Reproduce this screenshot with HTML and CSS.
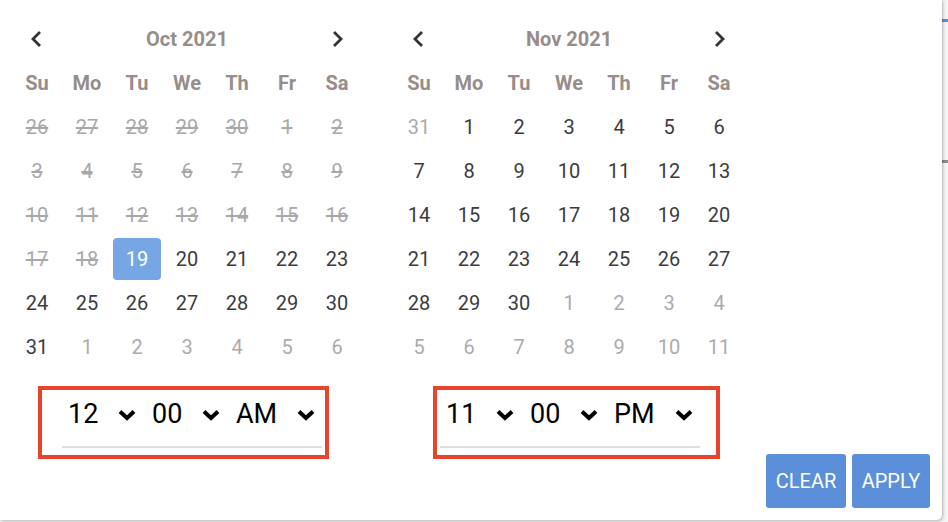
FILE: index.html
```html
<!DOCTYPE html>
<html>
<head>
<meta charset="utf-8">
<link rel="stylesheet" href="styles.css">
</head>
<body>
<div class="page-marks">
  <div class="mark mark-blue"></div>
  <div class="mark mark-gray"></div>
</div>
<div class="popup">
  <div class="columns">
    <div class="col">
      <div class="calendar">
        <div class="cal-head">
          <span class="nav"><svg width="14" height="18" viewBox="0 0 14 18"><polyline points="10,2 3,9 10,16" fill="none" stroke="#333" stroke-width="2.8"/></svg></span>
          <span class="title">Oct 2021</span>
          <span class="nav"><svg width="14" height="18" viewBox="0 0 14 18"><polyline points="4,2 11,9 4,16" fill="none" stroke="#333" stroke-width="2.8"/></svg></span>
        </div>
        <div class="grid">
          <span class="wd">Su</span><span class="wd">Mo</span><span class="wd">Tu</span><span class="wd">We</span><span class="wd">Th</span><span class="wd">Fr</span><span class="wd">Sa</span>
          <span class="d dis">26</span><span class="d dis">27</span><span class="d dis">28</span><span class="d dis">29</span><span class="d dis">30</span><span class="d dis">1</span><span class="d dis">2</span>
          <span class="d dis">3</span><span class="d dis">4</span><span class="d dis">5</span><span class="d dis">6</span><span class="d dis">7</span><span class="d dis">8</span><span class="d dis">9</span>
          <span class="d dis">10</span><span class="d dis">11</span><span class="d dis">12</span><span class="d dis">13</span><span class="d dis">14</span><span class="d dis">15</span><span class="d dis">16</span>
          <span class="d dis">17</span><span class="d dis">18</span><span class="d sel"><span class="sel-box">19</span></span><span class="d">20</span><span class="d">21</span><span class="d">22</span><span class="d">23</span>
          <span class="d">24</span><span class="d">25</span><span class="d">26</span><span class="d">27</span><span class="d">28</span><span class="d">29</span><span class="d">30</span>
          <span class="d">31</span><span class="d off">1</span><span class="d off">2</span><span class="d off">3</span><span class="d off">4</span><span class="d off">5</span><span class="d off">6</span>
        </div>
      </div>
      <div class="time-box time-box-left">
        <div class="time">
          <div class="tsel"><span>12</span><svg class="chev" width="20" height="14" viewBox="0 0 20 14"><polyline points="3,3.5 10,10 17,3.5" fill="none" stroke="#000" stroke-width="4"/></svg></div>
          <div class="tsel"><span>00</span><svg class="chev" width="20" height="14" viewBox="0 0 20 14"><polyline points="3,3.5 10,10 17,3.5" fill="none" stroke="#000" stroke-width="4"/></svg></div>
          <div class="tsel tsel-wide"><span>AM</span><svg class="chev" width="20" height="14" viewBox="0 0 20 14"><polyline points="3,3.5 10,10 17,3.5" fill="none" stroke="#000" stroke-width="4"/></svg></div>
        </div>
      </div>
    </div>
    <div class="col">
      <div class="calendar">
        <div class="cal-head">
          <span class="nav"><svg width="14" height="18" viewBox="0 0 14 18"><polyline points="10,2 3,9 10,16" fill="none" stroke="#333" stroke-width="2.8"/></svg></span>
          <span class="title">Nov 2021</span>
          <span class="nav"><svg width="14" height="18" viewBox="0 0 14 18"><polyline points="4,2 11,9 4,16" fill="none" stroke="#333" stroke-width="2.8"/></svg></span>
        </div>
        <div class="grid">
          <span class="wd">Su</span><span class="wd">Mo</span><span class="wd">Tu</span><span class="wd">We</span><span class="wd">Th</span><span class="wd">Fr</span><span class="wd">Sa</span>
          <span class="d off">31</span><span class="d">1</span><span class="d">2</span><span class="d">3</span><span class="d">4</span><span class="d">5</span><span class="d">6</span>
          <span class="d">7</span><span class="d">8</span><span class="d">9</span><span class="d">10</span><span class="d">11</span><span class="d">12</span><span class="d">13</span>
          <span class="d">14</span><span class="d">15</span><span class="d">16</span><span class="d">17</span><span class="d">18</span><span class="d">19</span><span class="d">20</span>
          <span class="d">21</span><span class="d">22</span><span class="d">23</span><span class="d">24</span><span class="d">25</span><span class="d">26</span><span class="d">27</span>
          <span class="d">28</span><span class="d">29</span><span class="d">30</span><span class="d off">1</span><span class="d off">2</span><span class="d off">3</span><span class="d off">4</span>
          <span class="d off">5</span><span class="d off">6</span><span class="d off">7</span><span class="d off">8</span><span class="d off">9</span><span class="d off">10</span><span class="d off">11</span>
        </div>
      </div>
      <div class="time-box time-box-right">
        <div class="time">
          <div class="tsel"><span>11</span><svg class="chev" width="20" height="14" viewBox="0 0 20 14"><polyline points="3,3.5 10,10 17,3.5" fill="none" stroke="#000" stroke-width="4"/></svg></div>
          <div class="tsel"><span>00</span><svg class="chev" width="20" height="14" viewBox="0 0 20 14"><polyline points="3,3.5 10,10 17,3.5" fill="none" stroke="#000" stroke-width="4"/></svg></div>
          <div class="tsel tsel-wide"><span>PM</span><svg class="chev" width="20" height="14" viewBox="0 0 20 14"><polyline points="3,3.5 10,10 17,3.5" fill="none" stroke="#000" stroke-width="4"/></svg></div>
        </div>
      </div>
    </div>
    <div class="actions">
      <button class="btn">CLEAR</button>
      <button class="btn btn-apply">APPLY</button>
    </div>
  </div>
</div>
</body>
</html>
```

FILE: styles.css
```css
html, body {
  margin: 0;
  padding: 0;
}
body {
  width: 948px;
  height: 522px;
  background: #f4f4f4;
  font-family: Roboto, "Liberation Sans", sans-serif;
  position: relative;
  overflow: hidden;
}
.page-marks {
  position: absolute;
  left: 942px;
  top: 0;
  width: 6px;
  height: 522px;
}
.mark {
  position: absolute;
  left: 0;
  width: 6px;
  height: 3px;
}
.mark-blue { top: 19px; background: #5b8fd9; }
.mark-gray { top: 160px; background: #8c8c8c; }
.popup {
  position: relative;
  width: 942px;
  height: 520px;
  background: #fff;
  border-bottom-right-radius: 5px;
  box-shadow: 1px 1px 3px rgba(0, 0, 0, 0.28);
  box-sizing: border-box;
  padding: 17px 12px 12px 12px;
}
.columns {
  display: flex;
  height: 100%;
}
.col {
  display: flex;
  flex-direction: column;
  width: 350px;
  margin-right: 32px;
}
.col:nth-child(2) {
  margin-right: 0;
}
.cal-head {
  display: flex;
  align-items: center;
  justify-content: space-between;
  height: 44px;
}
.nav {
  width: 50px;
  height: 44px;
  display: flex;
  align-items: center;
  justify-content: center;
}
.nav svg { display: block; }
.title {
  font-weight: 700;
  font-size: 20px;
  color: #978d8b;
}
.grid {
  display: grid;
  grid-template-columns: repeat(7, 50px);
  grid-auto-rows: 44px;
}
.wd, .d {
  display: flex;
  align-items: center;
  justify-content: center;
  font-size: 20px;
}
.wd {
  font-weight: 700;
  color: #978d8b;
}
.d {
  color: #3c3c3c;
}
.d.dis {
  color: #a8a8a8;
  text-decoration: line-through;
  text-decoration-thickness: 1.5px;
}
.d.off {
  color: #ababab;
}
.sel-box {
  width: 48px;
  height: 42px;
  border-radius: 4px;
  background: #77a6e4;
  color: #fff;
  display: flex;
  align-items: center;
  justify-content: center;
}
.time-box {
  margin-top: 17px;
  height: 73px;
  border: 4px solid #e8432b;
  box-sizing: border-box;
}
.time-box-left {
  margin-left: 26px;
  width: 291px;
  padding-left: 20px;
}
.time-box-right {
  margin-left: 39px;
  width: 287px;
  padding-left: 3px;
}
.time {
  display: flex;
  width: 260px;
  height: 58px;
  padding-bottom: 8px;
  border-bottom: 2px solid #dedede;
  box-sizing: border-box;
}
.tsel {
  width: 84px;
  display: flex;
  align-items: center;
  justify-content: space-between;
  padding: 0 9px 0 6px;
  box-sizing: border-box;
  font-size: 27px;
  color: #000;
}
.tsel-wide {
  width: 92px;
  padding-right: 6px;
}
.chev { display: block; margin-top: 2px; }
.actions {
  margin-left: auto;
  align-self: flex-end;
  display: flex;
  gap: 6px;
}
.btn {
  height: 54px;
  width: 80px;
  border: none;
  border-radius: 3px;
  background: #5b8fd9;
  color: #fff;
  font-family: Roboto, "Liberation Sans", sans-serif;
  font-size: 20px;
  padding: 0;
}
.btn-apply { width: 78px; }
```
